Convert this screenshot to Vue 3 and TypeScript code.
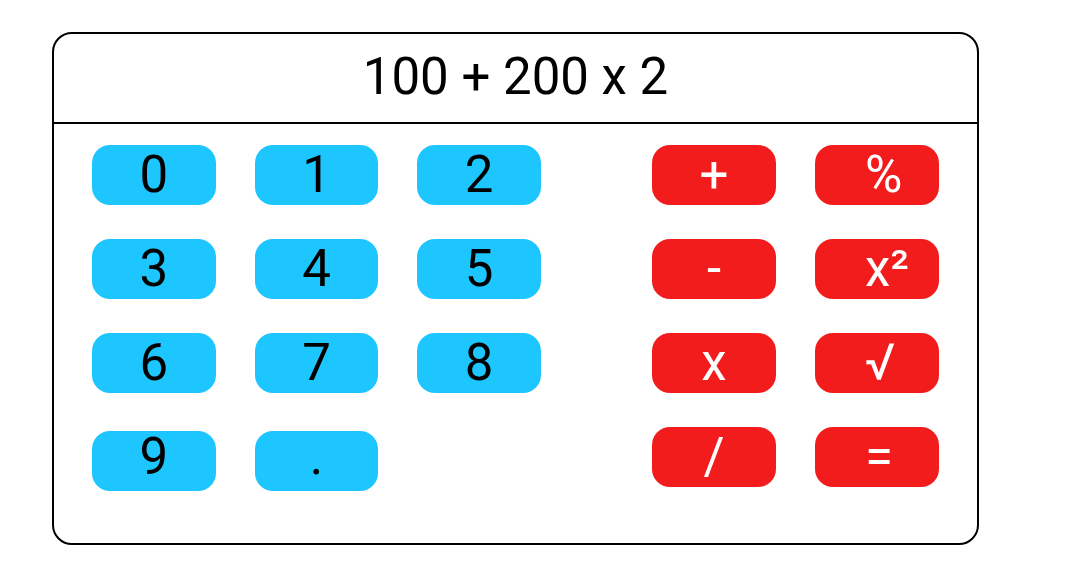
<script setup lang="ts">
import { ref } from 'vue'

interface Key {
  label: string
  name: string
}

const display = ref('100 + 200 x 2')

const digits: string[] = ['0', '1', '2', '3', '4', '5', '6', '7', '8', '9', '.']

const operators: Key[] = [
  { label: '+', name: 'plus' },
  { label: '%', name: 'percent' },
  { label: '-', name: 'minus' },
  { label: 'x²', name: 'square' },
  { label: 'x', name: 'multiply' },
  { label: '√', name: 'square root' },
  { label: '/', name: 'divide' },
  { label: '=', name: 'equals' },
]
</script>

<template>
  <main class="calculator">
    <output class="display">{{ display }}</output>
    <div class="keys">
      <div class="pad digits">
        <button
          v-for="(digit, i) in digits"
          :key="digit"
          type="button"
          class="key digit"
          :class="{ last: i > 8 }"
        >{{ digit }}</button>
      </div>
      <div class="pad operators">
        <button
          v-for="op in operators"
          :key="op.label"
          type="button"
          class="key operator"
          :aria-label="op.name"
        >{{ op.label }}</button>
      </div>
    </div>
  </main>
</template>

<style>
body {
  background: #fff;
}
</style>

<style scoped>
.calculator {
  margin: 32px 90px 0 52px;
  border: 2px solid #000;
  border-radius: 20px;
  font-family: Roboto, "Liberation Sans", sans-serif;
  font-size: 51px;
  line-height: 60px;
  color: #000;
}

.display {
  display: block;
  padding: 13px 0 15px;
  border-bottom: 2px solid #000;
  text-align: center;
}

.keys {
  display: flex;
  align-items: flex-start;
  gap: 111px;
  padding: 21px 38px 52px;
}

.pad {
  display: grid;
  column-gap: 39px;
  row-gap: 34px;
}

.digits {
  flex: 449 1 0;
  grid-template-columns: repeat(3, 1fr);
}

.operators {
  flex: 287 1 0;
  grid-template-columns: repeat(2, 1fr);
}

.key {
  height: 60px;
  min-width: 0;
  padding: 0;
  border: 0;
  border-radius: 18px;
  font: inherit;
  line-height: 60px;
  text-align: center;
  cursor: pointer;
}

.digit {
  background: #1ec6ff;
  color: #000;
}

.digit.last {
  margin-top: 4px;
  padding-bottom: 8px;
  line-height: 52px;
}

.operator {
  background: #f31c1c;
  color: #fff;
}

.operator:nth-child(even) {
  padding-left: 50px;
  text-align: left;
}
</style>
